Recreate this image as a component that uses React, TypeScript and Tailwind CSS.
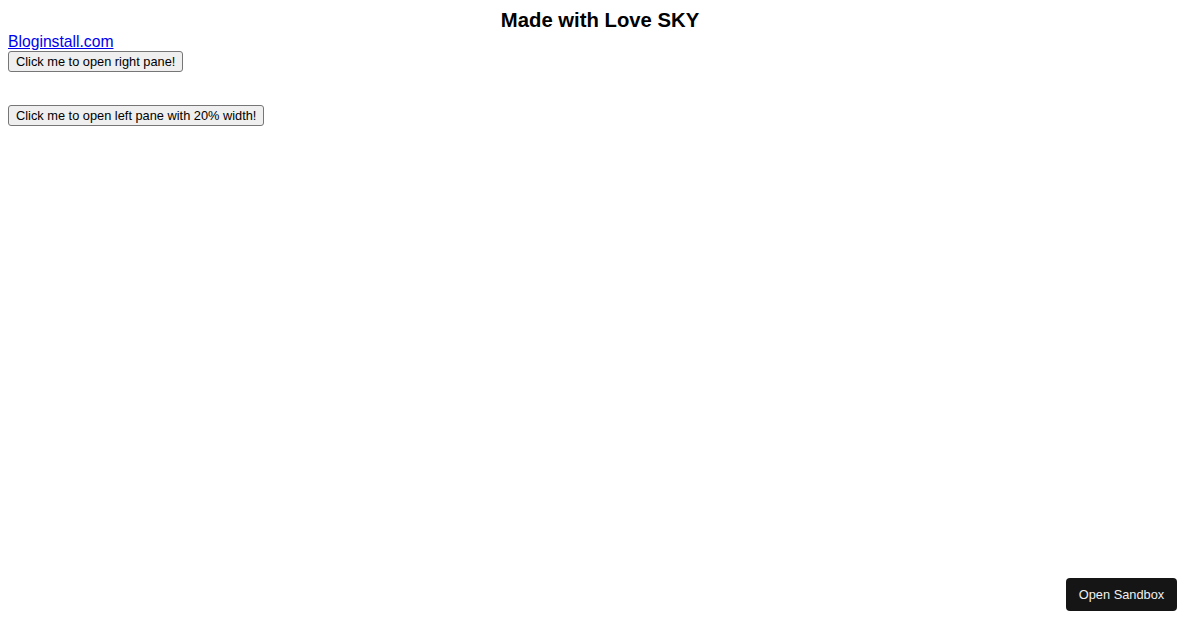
export default function App() {
  return (
    <div className="min-h-[630px] bg-white p-2 font-['Liberation_Sans',Arial,sans-serif] text-black">
      <h2 className="text-center text-[20.3px] font-bold leading-[25px]">Made with Love SKY</h2>
      <a href="#" className="block w-fit text-[15.7px] leading-[18px] text-[#0000ee] underline">
        Bloginstall.com
      </a>
      <div className="flex flex-col items-start gap-[33px]">
        <button className="rounded-[3px] border border-[#767676] bg-[#efefef] px-[7px] text-[12.8px] leading-[19px]">
          Click me to open right pane!
        </button>
        <button className="rounded-[3px] border border-[#767676] bg-[#efefef] px-[7px] text-[12.8px] leading-[19px]">
          Click me to open left pane with 20% width!
        </button>
      </div>
      <button className="fixed bottom-[19px] right-[23px] h-[33px] w-[111px] rounded-[4px] bg-[#151515] text-[12.8px] text-[#f0f0f0]">
        Open Sandbox
      </button>
    </div>
  )
}
